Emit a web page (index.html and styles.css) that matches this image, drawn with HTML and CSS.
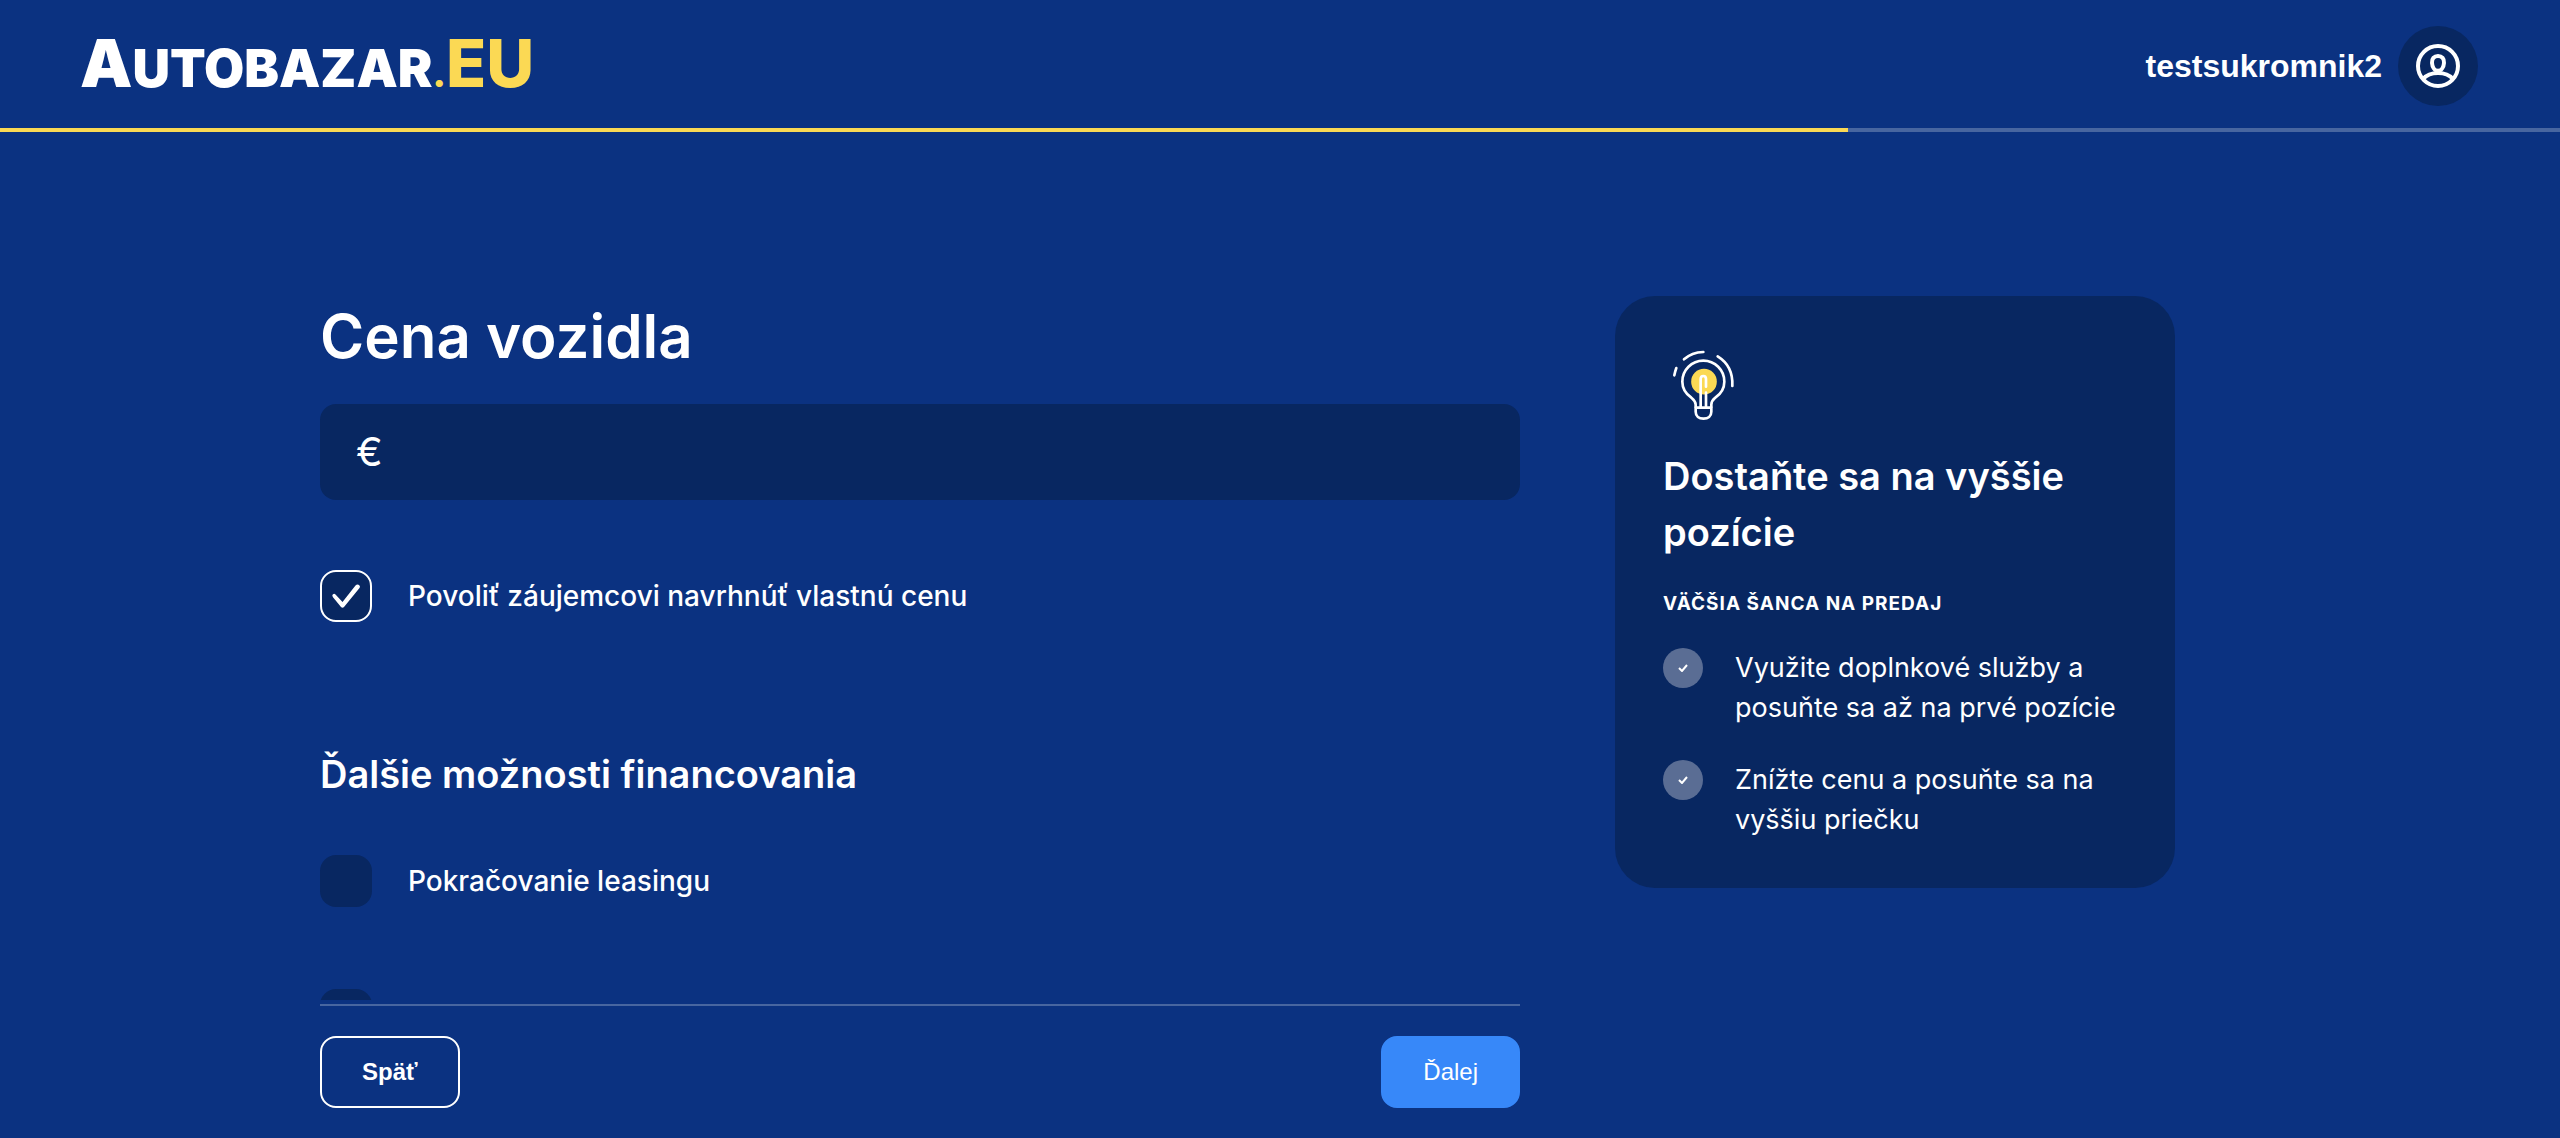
FILE: index.html
```html
<!DOCTYPE html>
<html lang="sk">
<head>
  <meta charset="utf-8">
  <meta name="viewport" content="width=device-width, initial-scale=1">
  <title>Cena vozidla</title>
  <link rel="stylesheet" href="styles.css">
</head>
<body>
  <header class="header">
    <a class="logo" href="#"><span class="logo-initial">A</span>UTOBAZAR<span class="logo-dot">.</span><span class="logo-domain">EU</span></a>
    <a class="user" href="#">
      <span>testsukromnik2</span>
      <span class="avatar">
        <svg width="44" height="44" viewBox="0 0 44 44" fill="none" stroke="#fff" stroke-width="4" aria-hidden="true">
          <circle cx="22" cy="22" r="20"/>
          <path d="M22 12c-4 0-6.300 2.800-6 6.800.3 4.400 2.600 8 6 8s5.700-3.600 6-8c.3-4-2-6.800-6-6.800Z"/>
          <path d="M7 35c3.500-4 8.500-6 15-6s11.500 2 15 6"/>
        </svg>
      </span>
    </a>
  </header>
  <div class="progress" role="progressbar" aria-valuenow="72" aria-valuemin="0" aria-valuemax="100" aria-label="Priebeh">
    <div class="progress-value" style="width: 72.2%"></div>
  </div>

  <main class="layout">
    <form class="form">
      <div class="fields">
        <h1><label for="price">Cena vozidla</label></h1>
        <div class="price">
          <span class="currency">€</span>
          <input id="price" type="text" inputmode="numeric">
        </div>
        <label class="option option-offer">
          <input type="checkbox" checked>
          <span>Povoliť záujemcovi navrhnúť vlastnú cenu</span>
        </label>
        <h2>Ďalšie možnosti financovania</h2>
        <div class="options">
          <label class="option">
            <input type="checkbox">
            <span>Pokračovanie leasingu</span>
          </label>
          <div class="option">
            <input type="checkbox" aria-label="Iné financovanie">
          </div>
        </div>
      </div>
      <div class="actions">
        <button class="button button-outline" type="button">Späť</button>
        <button class="button button-primary" type="submit">Ďalej</button>
      </div>
    </form>

    <aside class="tips">
      <svg class="bulb" width="80" height="80" viewBox="9 12 240 240" fill="none" stroke="#fff" stroke-width="8" stroke-linecap="round" stroke-linejoin="round" aria-hidden="true">
        <circle cx="132" cy="125" r="38.500" fill="#fbd954" stroke="none"/>
        <path d="M107 201v-7c0-11-6-15-13-21-17-12-27-27-27-48a63 63 0 0 1 126 0c0 21-10 36-27 48-7 6-12 10-12 21v7"/>
        <path d="M107 203h47v12c0 14-10 21-23.500 21S107 229 107 215Z"/>
        <path d="M122 200v-83c0-12 16-12 16 0v23M138 158v42"/>
        <path d="M43 106q2-11 6-22M72 58q23-21 58-22M173 49c31 19 46 49 44 89"/>
      </svg>
      <h3>Dostaňte sa na vyššie pozície</h3>
      <p class="tips-label">VÄČŠIA ŠANCA NA PREDAJ</p>
      <ul>
        <li>
          <span class="tick"><svg width="10" height="8" viewBox="0 0 10 8" fill="none" stroke="#fff" stroke-width="2" aria-hidden="true"><path d="m1 4 3 3 5-6"/></svg></span>
          <span>Využite doplnkové služby a posuňte sa až na prvé pozície</span>
        </li>
        <li>
          <span class="tick"><svg width="10" height="8" viewBox="0 0 10 8" fill="none" stroke="#fff" stroke-width="2" aria-hidden="true"><path d="m1 4 3 3 5-6"/></svg></span>
          <span>Znížte cenu a posuňte sa na vyššiu priečku</span>
        </li>
      </ul>
    </aside>
  </main>
</body>
</html>
```

FILE: styles.css
```css
:root {
  --blue: #0b3281;
  --navy: #082761;
  --yellow: #fbd954;
  --line: #4866a0;
}

* {
  box-sizing: border-box;
}

body {
  display: flex;
  flex-direction: column;
  height: 100vh;
  margin: 0;
  overflow: hidden;
  background: var(--blue);
  color: #fff;
  font: 400 28px/40px Inter, sans-serif;
}

h1, h2, h3, p, ul {
  margin: 0;
}

a {
  color: inherit;
  text-decoration: none;
}

.header {
  display: flex;
  align-items: center;
  justify-content: space-between;
  height: 128px;
  padding: 4px 82px 0 80px;
}

.logo {
  font-size: 52px;
  font-weight: 900;
  line-height: 80px;
}

.logo-initial,
.logo-domain {
  font-size: 66px;
}

.logo-domain {
  color: var(--yellow);
  font-weight: 800;
}

.logo-dot {
  color: var(--yellow);
  font-size: 36px;
  line-height: 1;
}

.user {
  display: flex;
  align-items: center;
  gap: 16px;
  font: 700 32px/40px "Liberation Sans", Arial, sans-serif;
}

.avatar {
  display: grid;
  place-items: center;
  width: 80px;
  height: 80px;
  border-radius: 50%;
  background: var(--navy);
}

.progress {
  flex: none;
  height: 4px;
  background: var(--line);
}

.progress-value {
  height: 100%;
  background: var(--yellow);
}

.layout {
  display: grid;
  flex: 1;
  grid-template-columns: 1200fr 560fr;
  grid-template-rows: minmax(0, 1fr);
  gap: 95px;
  width: 75%;
  min-height: 0;
  margin: 0 auto;
  padding: 164px 65px 0 0;
}

.form {
  display: flex;
  flex-direction: column;
  gap: 4px;
}

.fields {
  flex: 1;
  min-height: 0;
  overflow: hidden;
}

h1 {
  font-size: 60px;
  font-weight: 600;
  line-height: 80px;
}

.price {
  display: flex;
  align-items: center;
  gap: 16px;
  height: 96px;
  margin-top: 28px;
  padding: 0 36px;
  border-radius: 16px;
  background: var(--navy);
  font-size: 40px;
}

.price input {
  flex: 1;
  min-width: 0;
  border: 0;
  outline: 0;
  background: none;
  color: inherit;
  font: inherit;
}

.option {
  display: flex;
  align-items: center;
  gap: 36px;
  font-weight: 500;
}

.option input {
  flex: none;
  width: 52px;
  height: 52px;
  margin: 0;
  appearance: none;
  border-radius: 16px;
  background: var(--navy);
}

.option input:checked {
  display: grid;
  place-items: center;
  border: 2px solid #fff;
}

.option input:checked::before {
  width: 28px;
  height: 24px;
  background: #fff;
  clip-path: path("M3.500 10.500 10.500 18 23.500 1.500Q25.500-.5 27.500 1.500 28.500 2.500 27.500 4L12 23Q10.500 24.500 9 23L.8 13Q-.3 11 1 10.200 2.300 9.300 3.500 10.500Z");
  content: "";
}

.option-offer {
  margin-top: 70px;
}

h2 {
  margin-top: 124px;
  font-size: 38px;
  font-weight: 600;
  line-height: 56px;
}

.options {
  display: grid;
  gap: 82px;
  margin-top: 53px;
}

.actions {
  display: flex;
  justify-content: space-between;
  padding: 30px 0;
  border-top: 2px solid var(--line);
}

.button {
  height: 72px;
  padding: 0 40px;
  border: 2px solid #fff;
  border-radius: 16px;
  background: none;
  color: #fff;
  font: 700 24px/32px "Liberation Sans", Arial, sans-serif;
}

.button-primary {
  border-color: #3788f9;
  background: #3788f9;
  font-weight: 400;
}

.tips {
  align-self: start;
  padding: 48px;
  border-radius: 40px;
  background: var(--navy);
}

.bulb {
  display: block;
}

h3 {
  margin-top: 24px;
  font-size: 38px;
  font-weight: 600;
  line-height: 56px;
}

.tips-label {
  margin-top: 28px;
  font-size: 19px;
  font-weight: 700;
  line-height: 32px;
  letter-spacing: 1px;
}

ul {
  display: grid;
  gap: 32px;
  margin-top: 28px;
  padding: 0;
  font-size: 27px;
  list-style: none;
}

li {
  display: flex;
  gap: 32px;
}

.tick {
  display: grid;
  flex: none;
  place-items: center;
  width: 40px;
  height: 40px;
  border-radius: 50%;
  background: #5a6d94;
}
```
